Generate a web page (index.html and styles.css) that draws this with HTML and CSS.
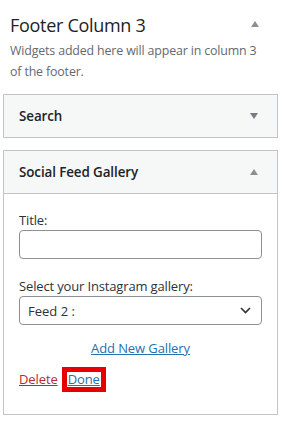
FILE: index.html
```html
<!DOCTYPE html>
<html>
<head>
<meta charset="utf-8">
<link rel="stylesheet" href="styles.css">
</head>
<body>
<div class="sidebar">
  <div class="sidebar-head">
    <h2 class="sidebar-title">Footer Column 3</h2>
    <span class="arrow arrow-up head-arrow"></span>
  </div>
  <p class="sidebar-desc">Widgets added here will appear in column 3 of the footer.</p>

  <div class="widget">
    <div class="widget-top">
      <span class="widget-name">Search</span>
      <span class="arrow arrow-down"></span>
    </div>
  </div>

  <div class="widget open">
    <div class="widget-top">
      <span class="widget-name">Social Feed Gallery</span>
      <span class="arrow arrow-up"></span>
    </div>
    <div class="widget-inside">
      <label class="field-label">Title:</label>
      <div class="input"></div>
      <label class="field-label second">Select your Instagram gallery:</label>
      <div class="select">
        <span>Feed 2 :</span>
        <svg class="chev" width="11" height="7" viewBox="0 0 11 7"><path d="M1 1l4.5 4.5L10 1" fill="none" stroke="#2c3338" stroke-width="1.6"/></svg>
      </div>
      <div class="add-row"><a class="link">Add New Gallery</a></div>
      <div class="actions">
        <a class="delete">Delete</a>
        <a class="link done">Done</a>
      </div>
    </div>
  </div>
</div>
</body>
</html>
```
FILE: styles.css
```css
* { box-sizing: border-box; }
html, body { margin: 0; padding: 0; background: #fff; }
body {
  font-family: "Open Sans", "Noto Sans", sans-serif;
  color: #1d2327;
  width: 285px;
  height: 422px;
  overflow: hidden;
}
.sidebar { padding: 0 7px 0 3px; }
.sidebar-head {
  display: flex;
  align-items: center;
  justify-content: space-between;
  padding: 13px 19px 0 7px;
  height: 38px;
}
.sidebar-title {
  margin: 0;
  font-size: 18px;
  font-weight: 400;
  line-height: 25px;
  letter-spacing: -0.3px;
}
.head-arrow { margin-top: -3px; }
.sidebar-desc {
  margin: 2px 0 0 7px;
  font-size: 12.4px;
  line-height: 21px;
  color: #646970;
  letter-spacing: -0.15px;
  width: 255px;
}
.arrow {
  width: 0; height: 0;
  border-left: 4px solid transparent;
  border-right: 4px solid transparent;
}
.arrow-up { border-bottom: 6px solid #8c8f94; }
.arrow-down { border-top: 6px solid #787c82; }
.widget {
  border: 1px solid #c3c4c7;
  background: #f6f7f7;
  margin-top: 12px;
}
.sidebar-desc + .widget { margin-top: 12px; }
.widget-top {
  height: 42px;
  display: flex;
  align-items: center;
  justify-content: space-between;
  padding: 0 19px 0 15px;
}
.widget-name {
  font-size: 13.4px;
  font-weight: 600;
  letter-spacing: -0.1px;
}
.widget.open .widget-top { border-bottom: 1px solid #c3c4c7; height: 43px; }
.widget-inside {
  background: #fff;
  padding: 16px 15px 27px 15px;
}
.field-label {
  display: block;
  font-size: 13px;
  line-height: 20px;
  letter-spacing: -0.15px;
  color: #2c3338;
}
.field-label.second { margin-top: 17px; }
.input, .select {
  height: 29px;
  border: 1px solid #8c8f94;
  border-radius: 4px;
  background: #fff;
}
.select {
  display: flex;
  align-items: center;
  justify-content: space-between;
  padding: 0 10px 0 8px;
  font-size: 13px;
  color: #2c3338;
}
.add-row {
  text-align: center;
  margin-top: 12px;
  line-height: 20px;
}
.link, .delete {
  font-size: 13px;
  text-decoration: underline;
  letter-spacing: -0.1px;
}
.link { color: #2271b1; }
.delete { color: #b32d2e; }
.actions {
  margin-top: 14px;
  display: flex;
  align-items: center;
  line-height: 15px;
}
.done {
  margin-left: 9px;
  padding: 0 1px;
  outline: 5px solid #e60000;
  background: #fff;
}
```
